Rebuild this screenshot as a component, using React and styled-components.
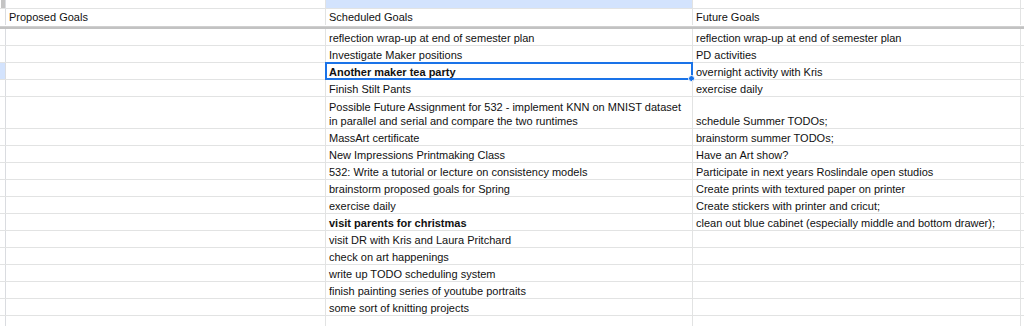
import React from "react";
import styled, { createGlobalStyle } from "styled-components";

const GlobalStyle = createGlobalStyle`
  * { box-sizing: border-box; }
  html, body { margin: 0; padding: 0; background: #ffffff; }
  body { font-family: "Liberation Sans", Arial, sans-serif; }
`;

const GRID = "#e2e3e3";
const BLUE = "#1a73e8";
const SEL_BG = "#d3e3fd";

const WIDTHS = { gutter: 6, a: 320, b: 367, c: 328 };

const Sheet = styled.div`
  width: 1024px;
  height: 326px;
  overflow: hidden;
  background: #fff;
  color: #111;
  font-size: 11px;
`;

const Row = styled.div`
  display: flex;
  height: ${(p) => p.$h}px;
  border-bottom: 1px solid ${(p) => (p.$noLine ? "transparent" : GRID)};
`;

const Gutter = styled.div`
  flex: 0 0 ${WIDTHS.gutter}px;
  border-right: 1px solid #dadce0;
  background: ${(p) => (p.$active ? SEL_BG : p.$dark ? "#c4c4c4" : "#fff")};
  border-left: ${(p) => (p.$dark ? "1px solid #fff" : "0")};
`;

const LetterCell = styled.div`
  flex: 0 0 ${(p) => p.$w}px;
  border-right: 1px solid ${GRID};
  background: ${(p) => (p.$active ? SEL_BG : "#fff")};
`;

const Cell = styled.div`
  position: relative;
  flex: 0 0 ${(p) => p.$w}px;
  border-right: 1px solid ${GRID};
  display: flex;
  align-items: flex-end;
  padding: 0 3px ${(p) => (p.$header ? 1 : 0)}px 3px;
  line-height: 14px;
  font-size: 11px;
  font-weight: ${(p) => (p.$bold ? 700 : 400)};
  white-space: pre-line;
`;

const Filler = styled.div`
  flex: 1 1 auto;
`;

const FrozenLine = styled.div`
  height: 3px;
  background: #c2c2c2;
  border-top: 1px solid #cfcfcf;
`;

const Selection = styled.div`
  position: absolute;
  left: -1px;
  top: -1px;
  right: -1px;
  bottom: -1px;
  border: 2px solid ${BLUE};
  pointer-events: none;
`;

const Handle = styled.div`
  position: absolute;
  right: -4px;
  bottom: -4px;
  width: 7px;
  height: 7px;
  border-radius: 50%;
  background: ${BLUE};
  border: 1px solid #fff;
`;

const rows = [
  { b: "reflection wrap-up at end of semester plan", c: "reflection wrap-up at end of semester plan" },
  { b: "Investigate Maker positions", c: "PD activities" },
  { b: "Another maker tea party", c: "overnight activity with Kris", bold: true, selected: true },
  { b: "Finish Stilt Pants", c: "exercise daily" },
  {
    b: "Possible Future Assignment for 532 - implement KNN on MNIST dataset\nin parallel and serial and compare the two runtimes",
    c: "schedule Summer TODOs;",
    h: 32,
  },
  { b: "MassArt certificate", c: "brainstorm summer TODOs;" },
  { b: "New Impressions Printmaking Class", c: "Have an Art show?" },
  { b: "532: Write a tutorial or lecture on consistency models", c: "Participate in next years Roslindale open studios" },
  { b: "brainstorm proposed goals for Spring", c: "Create prints with textured paper on printer" },
  { b: "exercise daily", c: "Create stickers with printer and cricut;" },
  { b: "visit parents for christmas", c: "clean out blue cabinet (especially middle and bottom drawer);", bold: true },
  { b: "visit DR with Kris and Laura Pritchard", c: "" },
  { b: "check on art happenings", c: "" },
  { b: "write up TODO scheduling system", c: "" },
  { b: "finish painting series of youtube portraits", c: "" },
  { b: "some sort of knitting projects", c: "" },
  { b: "", c: "" },
];

export default function App() {
  return (
    <>
      <GlobalStyle />
      <Sheet>
        <Row $h={9}>
          <Gutter $dark />
          <LetterCell $w={WIDTHS.a} />
          <LetterCell $w={WIDTHS.b} $active />
          <LetterCell $w={WIDTHS.c} />
          <Filler />
        </Row>
        <Row $h={17} $noLine>
          <Gutter />
          <Cell $w={WIDTHS.a} $header>Proposed Goals</Cell>
          <Cell $w={WIDTHS.b} $header>Scheduled Goals</Cell>
          <Cell $w={WIDTHS.c} $header>Future Goals</Cell>
          <Filler />
        </Row>
        <FrozenLine />
        {rows.map((r, i) => (
          <Row key={i} $h={r.h || 17}>
            <Gutter $active={r.selected} />
            <Cell $w={WIDTHS.a} />
            <Cell $w={WIDTHS.b} $bold={r.bold}>
              {r.b}
              {r.selected && (
                <Selection>
                  <Handle />
                </Selection>
              )}
            </Cell>
            <Cell $w={WIDTHS.c}>{r.c}</Cell>
            <Filler />
          </Row>
        ))}
      </Sheet>
    </>
  );
}
